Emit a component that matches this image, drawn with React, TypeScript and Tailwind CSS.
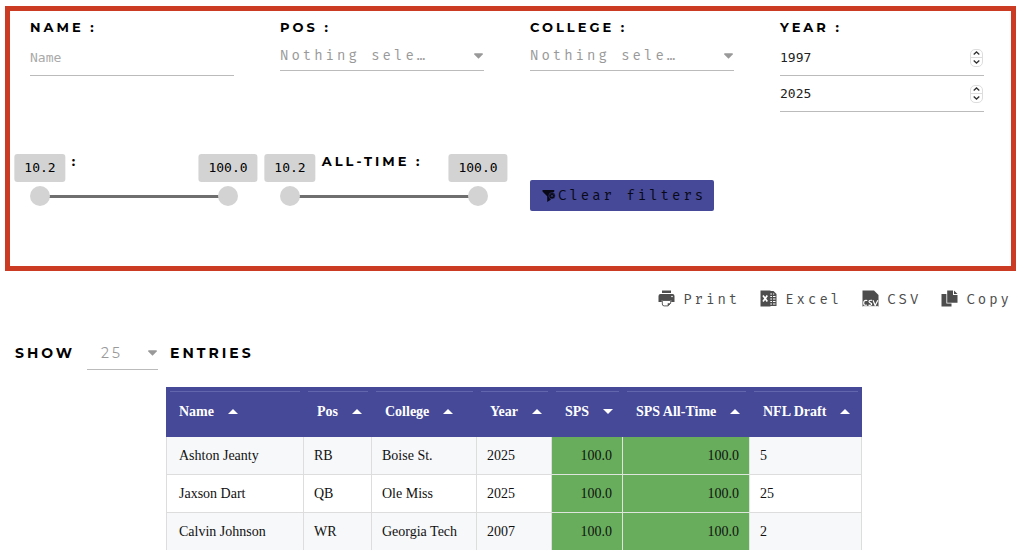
import { useState, type ReactNode } from "react";

const headingClass =
  "whitespace-nowrap font-['Montserrat','Inter',sans-serif] font-bold tracking-[3px] text-black uppercase";

const labelClass = `${headingClass} block text-[13px] leading-4`;

const monoClass = "font-['Fira_Mono','Liberation_Mono',monospace]";

const valueClass = "font-['DejaVu_Sans_Mono',monospace] text-[13px]";

function Caret() {
  return (
    <svg className="pointer-events-none absolute right-[1px] top-1/2 h-[6px] w-[9px] -translate-y-1/2" viewBox="0 0 9 6" aria-hidden="true">
      <path d="M0.3 0.3H8.7V1.5L4.5 5.7L0.3 1.5Z" fill="#999" />
    </svg>
  );
}

interface SelectFilterProps {
  id: string;
  label: string;
}

function SelectFilter({ id, label }: SelectFilterProps) {
  return (
    <div>
      <label htmlFor={id} className={labelClass}>
        {label} :
      </label>
      <div className="relative mt-[5px]">
        <select
          id={id}
          className={`${monoClass} block h-[31px] w-full appearance-none border-b border-[#bbb] bg-transparent pt-[2px] pr-4 text-sm tracking-[3px] text-[#999] outline-none`}
        >
          <option>Nothing sele…</option>
        </select>
        <Caret />
      </div>
    </div>
  );
}

interface YearInputProps {
  id?: string;
  label?: string;
  initial: number;
}

function YearInput({ id, label, initial }: YearInputProps) {
  const [year, setYear] = useState(initial);

  return (
    <div className="flex h-9 items-center border-b border-[#bbb]">
      <input
        id={id}
        aria-label={label}
        type="number"
        value={year}
        onChange={(e) => setYear(Number(e.target.value))}
        className={`${valueClass} w-full min-w-0 flex-1 [appearance:textfield] bg-transparent text-[#222] outline-none [&::-webkit-inner-spin-button]:appearance-none`}
      />
      <div className="mr-[1px] flex h-[18px] w-[13px] flex-col rounded-[5px] border border-[#ddd] text-[#333]">
        <button type="button" aria-label="Increase year" onClick={() => setYear(year + 1)} className="flex h-2 items-center justify-center border-b border-[#ddd]">
          <svg className="h-1 w-[7px]" viewBox="0 0 7 4" fill="none" stroke="currentColor" strokeWidth="1.3">
            <path d="M0.7 3.4L3.5 0.9L6.3 3.4" />
          </svg>
        </button>
        <button type="button" aria-label="Decrease year" onClick={() => setYear(year - 1)} className="flex h-2 items-center justify-center">
          <svg className="h-1 w-[7px]" viewBox="0 0 7 4" fill="none" stroke="currentColor" strokeWidth="1.3">
            <path d="M0.7 0.6L3.5 3.1L6.3 0.6" />
          </svg>
        </button>
      </div>
    </div>
  );
}

const MIN = 10.2;
const MAX = 100;

const rangeClass =
  "pointer-events-none absolute inset-0 h-5 w-full appearance-none bg-transparent [&::-webkit-slider-thumb]:pointer-events-auto [&::-webkit-slider-thumb]:size-5 [&::-webkit-slider-thumb]:appearance-none [&::-webkit-slider-thumb]:rounded-full [&::-webkit-slider-thumb]:bg-[#d3d3d3]";

const tipClass = `${valueClass} absolute bottom-6 -translate-x-1/2 rounded-[3px] bg-[#d3d3d3] px-[10px] py-1 leading-5 text-black`;

interface RangeFilterProps {
  id: string;
  stat: string;
  scope?: string;
}

function RangeFilter({ id, stat, scope = "" }: RangeFilterProps) {
  const [low, setLow] = useState(MIN);
  const [high, setHigh] = useState(MAX);

  // Thumbs are 20px wide, so their centres travel over the width less 20px
  const left = (value: number) => {
    const part = (value - MIN) / (MAX - MIN);
    return `calc(10px + (100% - 20px) * ${part})`;
  };

  return (
    <div>
      {/* The low value's bubble sits over the stat name */}
      <label htmlFor={id} className={labelClass}>
        <span className="invisible">{stat}</span> {scope} :
      </label>
      <div className="relative mt-[17px] -mr-1 h-5">
        <div className="flex h-5 items-center px-[10px]">
          <div className="h-[3px] w-full bg-[#6f6f6f]" />
        </div>
        <input
          id={id}
          type="range"
          aria-label={`${stat} ${scope} minimum`}
          min={MIN}
          max={MAX}
          step={0.1}
          value={low}
          onChange={(e) => setLow(Math.min(Number(e.target.value), high))}
          className={rangeClass}
        />
        <input
          type="range"
          aria-label={`${stat} ${scope} maximum`}
          min={MIN}
          max={MAX}
          step="any"
          value={high}
          onChange={(e) => setHigh(Math.max(Number(e.target.value), low))}
          className={rangeClass}
        />
        <output className={tipClass} style={{ left: left(low) }}>
          {low.toFixed(1)}
        </output>
        <output className={tipClass} style={{ left: left(high) }}>
          {high.toFixed(1)}
        </output>
      </div>
    </div>
  );
}

function ClearIcon() {
  return (
    <svg className="size-[14px] shrink-0" viewBox="0 0 14 14" aria-hidden="true">
      <path d="M0.5 1H12.3V2.6L8.7 5.6V10.8L5.2 13V7.2L0.5 2.6Z" fill="#080816" />
      <circle cx="10" cy="6.8" r="3.2" fill="#080816" stroke="#454997" strokeWidth="0.5" />
      <path d="M8.9 5.7L11.1 7.9M11.1 5.7L8.9 7.9" stroke="#454997" strokeWidth="0.7" />
    </svg>
  );
}

function PrintIcon() {
  return (
    <svg className="mb-[3px] size-[17px]" viewBox="0 0 17 17" fill="currentColor" aria-hidden="true">
      <path d="M4 0.5H13V3H4Z" />
      <path fillRule="evenodd" d="M2.5 4H14.5Q16.5 4 16.5 6V12H13.2V10H3.8V12H0.5V6Q0.5 4 2.5 4ZM14 5.7A0.8 0.8 0 1 0 14 7.3A0.8 0.8 0 1 0 14 5.7Z" />
      <path d="M4.3 10.5H12.7V13.2L10.2 15.9H6.2Q4.3 15.9 4.3 14Z" fill="white" stroke="currentColor" strokeWidth="0.9" />
      <path d="M9.7 16V13.2H12.8Z" />
    </svg>
  );
}

function ExcelIcon() {
  return (
    <svg className="mb-[3px] size-[17px]" viewBox="0 0 17 17" fill="currentColor" aria-hidden="true">
      <path d="M0.5 0.5H10.5V16.5H0.5Z" />
      <path d="M10 1H13.5L16.5 4V16H10Z" />
      <path d="M3 5.5L7.3 11.5M7.3 5.5L3 11.5" stroke="white" strokeWidth="1.7" />
      <path d="M10.3 4H12M10.3 6.5H12M10.3 9H12M10.3 11.5H12M10.3 14H12M13 6.5H15.5M13 9H15.5M13 11.5H15.5M13 14H15.5M13 4H14.2" stroke="white" strokeWidth="1.2" />
    </svg>
  );
}

function CsvIcon() {
  return (
    <svg className="mb-[3px] size-[17px]" viewBox="0 0 17 17" aria-hidden="true">
      <path d="M0.5 0.5H12L16.5 5V16.5H0.5Z" fill="currentColor" />
      <g fill="none" strokeLinejoin="round">
        <path d="M5.3 10.5Q1.5 9.5 1.7 13.2Q1.8 16 5 15M10 10.3Q6.8 10 7 11.7Q7.2 12.5 8.5 12.9Q10 13.4 9.6 14.6Q9.2 15.7 6.5 15.2M11 10.3L13.2 15.6L15.8 10.3" stroke="white" strokeWidth="1.2" />
        <path d="M1 16.4H16" stroke="white" strokeWidth="0.8" />
      </g>
    </svg>
  );
}

function CopyIcon() {
  return (
    <svg className="mb-[3px] size-[17px]" viewBox="0 0 17 17" fill="currentColor" aria-hidden="true">
      <path d="M6.2 0.5H12V5H16.5V12.8H6.2Z" />
      <path d="M13 0.5L16.5 4H13Z" />
      <path d="M0.5 4H5.4V13.6H10.5V16.5H0.5Z" />
    </svg>
  );
}

const tools: { name: string; icon: ReactNode }[] = [
  { name: "Print", icon: <PrintIcon /> },
  { name: "Excel", icon: <ExcelIcon /> },
  { name: "CSV", icon: <CsvIcon /> },
  { name: "Copy", icon: <CopyIcon /> },
];

const columns = [
  { name: "Name", width: "w-[138px]" },
  { name: "Pos", width: "w-[68px]" },
  { name: "College", width: "w-[105px]" },
  { name: "Year", width: "w-[75px]" },
  { name: "SPS", width: "w-[71px]", sorted: true },
  { name: "SPS All-Time", width: "w-[127px]" },
  { name: "NFL Draft", width: "w-[112px]" },
];

const players = [
  ["Ashton Jeanty", "RB", "Boise St.", "2025", "100.0", "100.0", "5"],
  ["Jaxson Dart", "QB", "Ole Miss", "2025", "100.0", "100.0", "25"],
  ["Calvin Johnson", "WR", "Georgia Tech", "2007", "100.0", "100.0", "2"],
];

function PlayerTable() {
  return (
    <table className="mx-auto w-[696px] table-fixed border-separate border-spacing-0 font-['Liberation_Serif',serif] text-sm leading-5 text-[#111]">
      <colgroup>
        {columns.map((column) => (
          <col key={column.name} className={column.width} />
        ))}
      </colgroup>
      <thead>
        <tr className="bg-[#454997] text-left text-white">
          {columns.map((column) => (
            <th key={column.name} className="h-[50px] px-1 pt-1 align-top font-bold">
              <button type="button" className="flex h-10 w-full items-center gap-[14px] border-t border-[#6266ad] pl-[9px] font-bold whitespace-nowrap">
                {column.name}
                <svg className="h-[5px] w-[10px]" viewBox="0 0 10 5" fill="currentColor" aria-hidden="true">
                  {column.sorted ? <path d="M0 0H10L5 5Z" /> : <path d="M0 5H10L5 0Z" />}
                </svg>
              </button>
            </th>
          ))}
        </tr>
      </thead>
      <tbody>
        {players.map((row) => (
          <tr key={row[0]} className="odd:bg-[#f7f8f9]">
            {row.map((cell, i) => (
              <td
                key={columns[i].name}
                className={
                  i === 4 || i === 5
                    ? "h-[38px] border-r border-b border-[#dde5dd] bg-[#67ad5b] px-[10px] text-right"
                    : "h-[38px] border-r border-b border-[#ddd] px-[10px] first:border-l first:pl-3"
                }
              >
                {cell}
              </td>
            ))}
          </tr>
        ))}
      </tbody>
    </table>
  );
}

export default function App() {
  return (
    <main className="h-screen overflow-hidden bg-white pt-[6px] pl-[5px] pr-2">
      {/* Filters */}
      <form className="border-[5px] border-[#cb3a22] pt-2 pr-[27px] pb-[55px] pl-5" onSubmit={(e) => e.preventDefault()}>
        <div className="grid grid-cols-4 gap-x-[46px] gap-y-[41px]">
          <div>
            <label htmlFor="name" className={labelClass}>
              Name :
            </label>
            <input
              id="name"
              type="text"
              placeholder="Name"
              className={`${valueClass} mt-[5px] block h-9 w-full border-b border-[#bbb] bg-transparent outline-none placeholder:text-[#aaa]`}
            />
          </div>
          <SelectFilter id="pos" label="Pos" />
          <SelectFilter id="college" label="College" />
          <div>
            <label htmlFor="year" className={labelClass}>
              Year :
            </label>
            <div className="mt-[5px]">
              <YearInput id="year" initial={1997} />
              <YearInput label="Year to" initial={2025} />
            </div>
          </div>
          <RangeFilter id="sps" stat="SPS" />
          <RangeFilter id="sps-all-time" stat="SPS" scope="All-Time" />
          <div className="pt-[27px]">
            <button
              type="reset"
              className={`${monoClass} flex h-[31px] w-[184px] items-center gap-[2px] rounded-[2px] bg-[#454997] pl-3 text-sm tracking-[3px] whitespace-nowrap text-[#080816]`}
            >
              <ClearIcon />
              Clear filters
            </button>
          </div>
        </div>
      </form>

      {/* Export tools */}
      <div className="mt-[17px] mr-1 flex justify-end gap-5">
        {tools.map((tool) => (
          <button key={tool.name} type="button" className={`${monoClass} flex items-center gap-2 text-sm leading-6 tracking-[3px] text-[#4d4d4d]`}>
            {tool.icon}
            {tool.name}
          </button>
        ))}
      </div>

      {/* Page length */}
      <label className={`${headingClass} mt-6 ml-[10px] flex h-[34px] items-center gap-3 text-sm`}>
        Show
        <span className="relative">
          <select className="block h-[34px] w-[71px] appearance-none border-b border-[#bbb] bg-transparent pl-[14px] text-sm font-normal tracking-[3px] text-[#999] outline-none">
            <option>25</option>
          </select>
          <Caret />
        </span>
        Entries
      </label>

      <div className="mt-[17px] pl-[7px]">
        <PlayerTable />
      </div>
    </main>
  );
}
